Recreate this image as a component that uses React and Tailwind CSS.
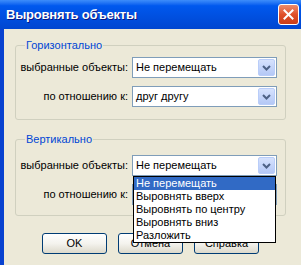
import React from 'react';

const font = "font-['Tahoma','Liberation_Sans',sans-serif]";

// Small blue arrow button of an XP combo box
function ComboArrow() {
  return (
    <div className="w-[17px] h-[17px] mr-[1px] rounded-[2px] border border-[#B9CDF9] bg-linear-to-b from-[#D6E2FD] to-[#B4C8F6] flex items-center justify-center">
      <svg width="9" height="6" viewBox="0 0 9 6">
        <path d="M1 1 L4.5 4.5 L8 1" fill="none" stroke="#4D6185" strokeWidth="2" />
      </svg>
    </div>
  );
}

function Combo({ value }) {
  return (
    <div className="h-[21px] w-[145px] border border-[#7F9DB9] bg-white flex items-center justify-between">
      <span className="pl-[3px] text-black">{value}</span>
      <ComboArrow />
    </div>
  );
}

function Group({ title, first, second, className }) {
  return (
    <fieldset className={`border border-[#D0D0BF] rounded-[3px] ${className}`}>
      <legend className="ml-[9px] px-[1px] text-[#0046D5] leading-[13px]">{title}</legend>
      <div className="grid grid-cols-[112px_145px] gap-x-[4px] gap-y-[8px] items-center">
        <span className="text-right">выбранные объекты:</span>
        <Combo value={first} />
        <span className="text-right">по отношению к:</span>
        <Combo value={second} />
      </div>
    </fieldset>
  );
}

function XpButton({ children }) {
  return (
    <button className="w-[65px] h-[21px] rounded-[3px] border border-[#003C74] bg-linear-to-b from-white via-[#F4F3EE] to-[#DCD9CB] text-black flex items-center justify-center">
      {children}
    </button>
  );
}

const items = ['Не перемещать', 'Выровнять вверх', 'Выровнять по центру', 'Выровнять вниз', 'Разложить'];

export default function App() {
  return (
    <div className={`relative w-[301px] h-[265px] overflow-hidden bg-[#0842D0] text-[11px] ${font}`}>
      {/* Title bar */}
      <div className="h-[29px] flex items-center justify-between pl-[6px] pr-[2px] bg-linear-to-b from-[#3D8DFA] via-[#0058EE] via-20% to-[#0046D0]">
        <span className="pt-[1px] text-white font-bold text-[13px] tracking-[-0.2px] text-shadow-[1px_1px_0px_#0A1883]">Выровнять объекты</span>
        <div className="w-[21px] h-[21px] mb-[1px] rounded-[3px] border border-white bg-linear-to-b from-[#EC8B6C] via-[#E0502A] to-[#C93C17] flex items-center justify-center">
          <svg width="11" height="11" viewBox="0 0 11 11">
            <path d="M1.5 1.5 L9.5 9.5 M9.5 1.5 L1.5 9.5" stroke="white" strokeWidth="2" strokeLinecap="square" />
          </svg>
        </div>
      </div>

      {/* Dialog body */}
      <div className="ml-[4px] h-[236px] bg-[#ECE9D8] pl-[11px] pt-[10px]">
        <Group title="Горизонтально" first="Не перемещать" second="друг другу" className="w-[271px] pb-[12px] pt-[5px]" />
        <Group title="Вертикально" first="Не перемещать" second="" className="w-[271px] mt-[13px] pb-[10px] pt-[9px]" />

        <div className="flex gap-[11px] ml-[27px] mt-[17px]">
          <XpButton>OK</XpButton>
          <XpButton>Отмена</XpButton>
          <XpButton>Справка</XpButton>
        </div>
      </div>

      {/* Open drop-down list */}
      <ul className="absolute left-[133px] top-[176px] w-[143px] border border-black bg-white">
        {items.map((item, i) => (
          <li
            key={item}
            className={`h-[13px] leading-[13px] pl-[2px] ${i === 0 ? 'bg-[#316AC5] text-white' : 'text-black'}`}
          >
            {item}
          </li>
        ))}
      </ul>
    </div>
  );
}
